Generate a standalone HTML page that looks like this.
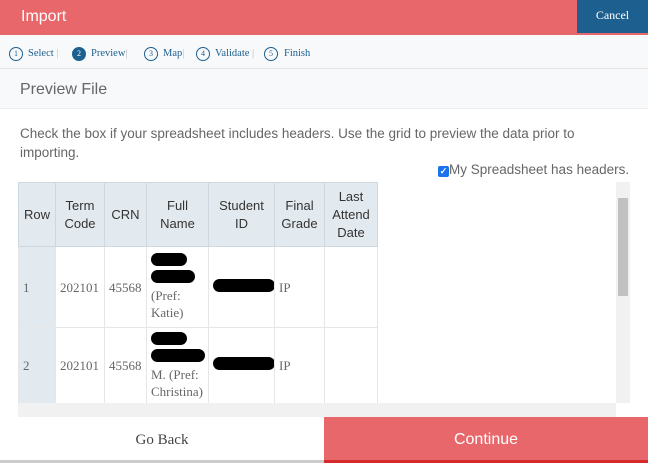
<!DOCTYPE html><html><head><style>
*{margin:0;padding:0;box-sizing:border-box}
body{width:648px;height:465px;overflow:hidden;background:#fff;font-family:"Liberation Sans",sans-serif;position:relative}
.hdr{position:absolute;left:0;top:0;width:648px;height:35px;background:#e8676a}
.hdr .t{position:absolute;left:21px;top:8px;color:#fff;font-size:16px}
.cancel{position:absolute;left:577px;top:0;width:71px;height:33px;background:#1d6090;color:#fff;font-family:"Liberation Serif",serif;font-size:12px;text-align:center;line-height:31px}
.steps{position:absolute;top:35px;left:0;width:648px;height:34px;background:#f8f9fa;border-bottom:1px solid #e3e3e3;font-family:"Liberation Serif",serif;font-size:10.5px;color:#1d6090}
.steps span{position:absolute;top:13px;white-space:nowrap}
.sep{color:#bbb;font-style:normal}
.c{position:absolute;top:12px;width:14px;height:14px;border:1px solid #1d6090;border-radius:50%;font-size:8px;text-align:center;line-height:12px}
.c.f{background:#1d6090;color:#fff}
.pf{position:absolute;top:69px;left:0;width:648px;height:40px;background:#f8f9fa;border-bottom:1px solid #eee;font-size:16px;color:#666;padding:12px 0 0 20px}
.desc{position:absolute;left:20px;top:124px;width:600px;font-size:13.5px;color:#666;line-height:19px}
.chk{position:absolute;left:438px;top:162px;font-size:13.5px;color:#666;white-space:nowrap}
.chk b{display:inline-block;width:11px;height:11px;background:#1a73e8;border-radius:2px;color:#fff;font-size:9px;line-height:11px;text-align:center;vertical-align:0px;font-weight:bold}
.grid{position:absolute;left:18px;top:182px;width:612px;height:235px;overflow:hidden}
table{border-collapse:collapse;position:absolute;left:0;top:0;table-layout:fixed;width:359px}
th{background:#e3eaef;font-weight:normal;font-size:13px;color:#333;border:1px solid #cfd8de;height:64px;line-height:18px;padding:0 2px}
td{font-family:"Liberation Serif",serif;font-size:13px;color:#666;border:1px solid #e6e6e6;padding:0 2px 0 4px;line-height:17px;overflow:hidden;white-space:nowrap}
td:first-child{background:#e3eaef}
.bl{display:inline-block;background:#000;border-radius:8px;height:13px}
.vs{position:absolute;left:598px;top:0;width:14px;height:221px;background:#f1f1f1}
.vs i{position:absolute;left:2px;top:16px;width:10px;height:98px;background:#c1c1c1}
.hs{position:absolute;left:0;top:221px;width:598px;height:14px;background:#f1f1f1}
.btn1{position:absolute;left:0;top:417px;width:324px;height:46px;border-bottom:3px solid #ccc;font-family:"Liberation Serif",serif;font-size:15px;color:#444;text-align:center;line-height:46px}
.btn2{position:absolute;left:324px;top:417px;width:324px;height:46px;background:#e8676a;border-bottom:3px solid #d42a2a;color:#fff;font-size:16px;text-align:center;line-height:46px}
</style></head><body>
<div class="hdr"><div class="t">Import</div></div>
<div class="cancel">Cancel</div>
<div class="steps">
<div class="c" style="left:9px">1</div><span style="left:28px">Select <i class="sep">|</i></span>
<div class="c f" style="left:72px">2</div><span style="left:91px">Preview<i class="sep">|</i></span>
<div class="c" style="left:144px">3</div><span style="left:163px">Map<i class="sep">|</i></span>
<div class="c" style="left:196px">4</div><span style="left:215px">Validate<i class="sep"> |</i></span>
<div class="c" style="left:264px">5</div><span style="left:284px">Finish</span>
</div>
<div class="pf">Preview File</div>
<div class="desc">Check the box if your spreadsheet includes headers. Use the grid to preview the data prior to importing.</div>
<div class="chk"><b>✓</b>My Spreadsheet has headers.</div>
<div class="grid">
<table>
<colgroup><col style="width:37px"><col style="width:49px"><col style="width:42px"><col style="width:62px"><col style="width:66px"><col style="width:50px"><col style="width:53px"></colgroup>
<tr><th>Row</th><th>Term<br>Code</th><th>CRN</th><th>Full<br>Name</th><th>Student<br>ID</th><th>Final<br>Grade</th><th>Last<br>Attend<br>Date</th></tr>
<tr style="height:81px"><td>1</td><td>202101</td><td>45568</td><td><span class="bl" style="width:36px"></span><br><span class="bl" style="width:44px"></span><br>(Pref:<br>Katie)</td><td><span class="bl" style="width:62px"></span></td><td>IP</td><td></td></tr>
<tr style="height:76px"><td>2</td><td>202101</td><td>45568</td><td><span class="bl" style="width:36px"></span><br><span class="bl" style="width:54px"></span><br>M. (Pref:<br>Christina)</td><td><span class="bl" style="width:62px"></span></td><td>IP</td><td></td></tr>
</table>
<div class="vs"><i></i></div><div class="hs"></div>
</div>
<div class="btn1">Go Back</div>
<div class="btn2">Continue</div>
</body></html>
